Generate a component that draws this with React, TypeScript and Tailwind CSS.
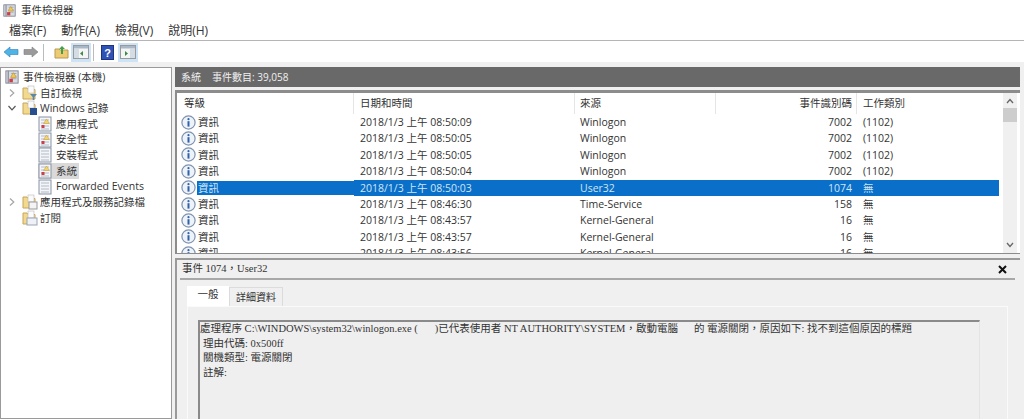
const sans = "font-['Open_Sans','Noto_Sans_CJK_TC',sans-serif]";

function InfoIcon() {
  return (
    <svg width="15" height="15" viewBox="0 0 15 15" className="shrink-0">
      <circle cx="7.5" cy="7.5" r="6.6" fill="#eef3f9" stroke="#7f93b0" strokeWidth="1.2" />
      <circle cx="7.5" cy="4.2" r="1.1" fill="#2f62a8" />
      <rect x="6.5" y="6.2" width="2" height="5.4" fill="#2f62a8" />
    </svg>
  );
}

function AppIcon({ size = 16 }: { size?: number }) {
  return (
    <svg width={size} height={size} viewBox="0 0 16 16" className="shrink-0">
      <rect x="1" y="1" width="14" height="14" fill="#d8dbe2" stroke="#7a7f8c" />
      <rect x="3" y="1" width="1.5" height="14" fill="#8e93a0" />
      <path d="M7 4h6M7 7h6M7 10h6" stroke="#9aa0ac" />
      <path d="M9.5 3 L13 8.5 H6.5 Z" fill="#f2c94c" stroke="#b88a1c" strokeWidth="0.6" />
      <rect x="5" y="10" width="4" height="4" fill="#c9404a" />
    </svg>
  );
}

function LogIcon({ plain }: { plain?: boolean }) {
  return (
    <svg width="14" height="16" viewBox="0 0 14 16" className="shrink-0">
      <rect x="1" y="1" width="12" height="14" fill="#f3f5f8" stroke="#8a94a3" />
      <path d="M3 4h8M3 7h8M3 10h8M3 13h8" stroke="#b3bac6" />
      {!plain && <path d="M8.5 3 L11.5 7.5 H5.5 Z" fill="#f2d36c" stroke="#c39a34" strokeWidth="0.5" />}
      {!plain && <rect x="3.5" y="9" width="3" height="3" fill="#c9404a" />}
    </svg>
  );
}

function FolderIcon({ badge }: { badge?: "filter" | "win" | "page" | "sub" }) {
  return (
    <svg width="16" height="16" viewBox="0 0 16 16" className="shrink-0">
      <path d="M1 3h4l1 1.5h7V14H1Z" fill="#f3d98b" stroke="#c6a65a" />
      <rect x="6" y="1" width="6" height="7" fill="#fbfbfb" stroke="#b9b9b9" strokeWidth="0.6" />
      {badge === "filter" && <path d="M8 9h7l-2.7 3v3h-1.6v-3Z" fill="#5b87a8" />}
      {badge === "win" && <rect x="8" y="8" width="7" height="7" fill="#2a4f8f" />}
      {badge === "page" && <rect x="7" y="8" width="8" height="7" fill="#f4f4f4" stroke="#9a9a9a" />}
      {badge === "sub" && <rect x="5" y="8" width="10" height="7" fill="#eef1f6" stroke="#9aa4b5" />}
    </svg>
  );
}

function Chevron({ down }: { down?: boolean }) {
  return (
    <svg width="8" height="8" viewBox="0 0 8 8" className="shrink-0">
      <path d={down ? "M0.5 2 L4 5.8 L7.5 2" : "M2 0.5 L5.8 4 L2 7.5"} fill="none" stroke={down ? "#555" : "#a6a6a6"} strokeWidth="1.2" />
    </svg>
  );
}

function ToolButton({ children, active }: { children: React.ReactNode; active?: boolean }) {
  return (
    <div className={`flex h-[19px] w-[20px] items-center justify-center ${active ? "bg-[#cde4f7]" : ""}`}>
      {children}
    </div>
  );
}

function PaneIcon({ right }: { right?: boolean }) {
  return (
    <svg width="16" height="14" viewBox="0 0 16 14">
      <rect x="0.5" y="0.5" width="15" height="13" fill="#f5f5f5" stroke="#9a9a9a" />
      <rect x="1" y="1" width="14" height="2.5" fill="#a9b7c6" />
      <rect x={right ? 10 : 1} y="4" width="5" height="9" fill="#d4dce4" />
      <path d={right ? "M5 6v5l3-2.5Z" : "M10 6v5l-3-2.5Z"} fill="#3c8c46" />
    </svg>
  );
}

function Arrow({ dir, color }: { dir: "l" | "r"; color: string }) {
  return (
    <svg width="16" height="12" viewBox="0 0 16 12">
      <path d={dir === "l" ? "M1 6 L7 1 V3.5 H15 V8.5 H7 V11 Z" : "M15 6 L9 1 V3.5 H1 V8.5 H9 V11 Z"} fill={color} stroke={dir === "l" ? "#2f7fb5" : "#7d7d7d"} strokeWidth="0.6" />
    </svg>
  );
}

const rows = [
  ["2018/1/3 上午 08:50:09", "Winlogon", "7002", "(1102)"],
  ["2018/1/3 上午 08:50:05", "Winlogon", "7002", "(1102)"],
  ["2018/1/3 上午 08:50:05", "Winlogon", "7002", "(1102)"],
  ["2018/1/3 上午 08:50:04", "Winlogon", "7002", "(1102)"],
  ["2018/1/3 上午 08:50:03", "User32", "1074", "無"],
  ["2018/1/3 上午 08:46:30", "Time-Service", "158", "無"],
  ["2018/1/3 上午 08:43:57", "Kernel-General", "16", "無"],
  ["2018/1/3 上午 08:43:57", "Kernel-General", "16", "無"],
  ["2018/1/3 上午 08:43:56", "Kernel-General", "16", "無"],
];

function TreeRow({ active, children, label }: { active?: boolean; children: React.ReactNode; label: string }) {
  return (
    <div className="flex h-[15.7px] items-center pl-[37px]">
      <div className={`flex items-center gap-[4px] pr-[2px] ${active ? "bg-[#d9d9d9]" : ""}`}>
        {children}
        <span className="whitespace-nowrap">{label}</span>
      </div>
    </div>
  );
}

export default function App() {
  return (
    <div className={`flex h-[419px] w-[1024px] flex-col overflow-hidden bg-[#f0f0f0] text-[11px] leading-none text-[#333] ${sans}`}>
      <div className="flex h-[20px] shrink-0 items-center gap-[5px] bg-white pl-[3px] pt-[1px]">
        <AppIcon size={13} />
        <span className="text-[10.5px]">事件檢視器</span>
      </div>
      <div className="flex h-[21px] shrink-0 items-center gap-[15px] border-b border-[#b5b5b5] bg-white pl-[9px] pt-[1px] text-[12px]">
        <span>檔案(F)</span>
        <span>動作(A)</span>
        <span>檢視(V)</span>
        <span>說明(H)</span>
      </div>
      <div className="flex h-[21px] shrink-0 items-center bg-white pl-[1px] pt-[1px]">
        <ToolButton><Arrow dir="l" color="#4fb3e6" /></ToolButton>
        <ToolButton><Arrow dir="r" color="#9a9a9a" /></ToolButton>
        <div className="mx-[2px] h-[17px] w-px bg-[#bbb]" />
        <div className="w-[5px]" />
        <ToolButton>
          <svg width="15" height="14" viewBox="0 0 15 14">
            <path d="M1 4h4l1 1h8v8H1Z" fill="#eecb72" stroke="#b89a4e" />
            <path d="M7 9V4H5l3-3 3 3H9v5Z" fill="#3ea04a" />
          </svg>
        </ToolButton>
        <ToolButton active><PaneIcon /></ToolButton>
        <div className="mx-[2px] h-[17px] w-px bg-[#bbb]" />
        <div className="w-[1px]" />
        <ToolButton>
          <svg width="13" height="15" viewBox="0 0 13 15">
            <rect x="0.5" y="0.5" width="12" height="14" fill="#2f52b5" stroke="#1d3580" />
            <text x="6.5" y="11.5" textAnchor="middle" fontSize="11" fontWeight="700" fill="#fff" fontFamily="Liberation Sans">?</text>
          </svg>
        </ToolButton>
        <div className="w-[1px]" />
        <ToolButton active><PaneIcon right /></ToolButton>
      </div>

      <div className="flex min-h-0 flex-1 pt-[5px]">
        {/* Tree */}
        <div className="mr-[3px] flex w-[172px] shrink-0 flex-col border border-[#9a9a9a] bg-white pt-[1px] text-[10.5px]">
          <div className="flex h-[16px] items-center gap-[4px] pl-[4px]">
            <AppIcon size={14} />
            <span>事件檢視器 (本機)</span>
          </div>
          <div className="flex h-[15.5px] items-center pl-[7px]"><Chevron /><span className="w-[6px]" /><FolderIcon badge="filter" /><span className="ml-[2px]">自訂檢視</span></div>
          <div className="flex h-[15.5px] items-center pl-[7px]"><Chevron down /><span className="w-[6px]" /><FolderIcon badge="win" /><span className="ml-[2px]">Windows 記錄</span></div>
          <TreeRow label="應用程式"><LogIcon /></TreeRow>
          <TreeRow label="安全性"><LogIcon /></TreeRow>
          <TreeRow label="安裝程式"><LogIcon plain /></TreeRow>
          <TreeRow active label="系統"><LogIcon /></TreeRow>
          <TreeRow label="Forwarded Events"><LogIcon plain /></TreeRow>
          <div className="flex h-[16px] items-center pl-[7px]"><Chevron /><span className="w-[6px]" /><FolderIcon badge="page" /><span className="ml-[2px]">應用程式及服務記錄檔</span></div>
          <div className="flex h-[16px] items-center gap-[2px] pl-[21px]"><FolderIcon badge="sub" /><span>訂閱</span></div>
        </div>

        {/* Right */}
        <div className="mr-[4px] flex min-w-0 flex-1 flex-col">
          <div className="flex h-[20px] shrink-0 items-center gap-[11px] bg-[#696969] pl-[6px] text-[10px] text-[#f0f0f0]">
            <span>系統</span>
            <span>事件數目: 39,058</span>
          </div>
          {/* Event list */}
          <div className="mt-[3px] flex h-[164px] shrink-0 overflow-hidden border-2 border-b border-[#8c8c8c] border-r-0 border-t-[3px] bg-white">
            <div className="min-w-0 flex-1 overflow-hidden">
              <div className="flex h-[21px] items-center text-[10.5px]">
                <div className="flex h-full w-[177px] shrink-0 items-center border-r border-[#e5e5e5] pl-[7px]">等級</div>
                <div className="flex h-full w-[221px] shrink-0 items-center border-r border-[#e5e5e5] pl-[6px]">日期和時間</div>
                <div className="flex h-full w-[141px] shrink-0 items-center border-r border-[#e5e5e5] pl-[5px]">來源</div>
                <div className="flex h-full w-[141px] shrink-0 items-center justify-end border-r border-[#e5e5e5] pr-[4px]">事件識別碼</div>
                <div className="flex h-full items-center pl-[6px]">工作類別</div>
              </div>
              {rows.map((r, i) => {
                const sel = i === 4;
                return (
                  <div key={i} className="flex h-[16.4px] items-center text-[10.5px]">
                    <div className="flex w-[177px] shrink-0 items-center pl-[4px]">
                      <InfoIcon />
                      <span className={`ml-px flex-1 py-[2px] pl-[1px] ${sel ? "bg-[#0a6fc9] text-[#cfe6f7]" : ""}`}>資訊</span>
                    </div>
                    <div className={`flex h-full flex-1 items-center ${sel ? "bg-[#0a6fc9] text-[#cfe6f7]" : ""}`}>
                      <div className="w-[221px] shrink-0 pl-[6px]">{r[0]}</div>
                      <div className="w-[141px] shrink-0 pl-[5px]">{r[1]}</div>
                      <div className="w-[141px] shrink-0 pr-[5px] text-right">{r[2]}</div>
                      <div className="pl-[6px]">{r[3]}</div>
                    </div>
                  </div>
                );
              })}
            </div>
            <div className="ml-[4px] mr-[3px] flex w-[14px] shrink-0 flex-col items-center bg-[#f0f0f0]">
              <div className="flex h-[15px] items-center justify-center"><svg width="8" height="6" viewBox="0 0 8 6"><path d="M1 5 L4 1.5 L7 5" fill="none" stroke="#666" strokeWidth="1.3" /></svg></div>
              <div className="h-[14px] w-full bg-[#cdcdcd]" />
              <div className="flex-1" />
              <div className="flex h-[16px] items-center justify-center"><svg width="8" height="6" viewBox="0 0 8 6"><path d="M1 1 L4 4.5 L7 1" fill="none" stroke="#666" strokeWidth="1.3" /></svg></div>
            </div>
          </div>
          {/* Detail */}
          <div className="mt-[4px] flex min-h-0 flex-1 flex-col border-l-2 border-t-2 border-[#9a9a9a]">
            <div className="ml-[3px] mr-[5px] flex h-[20px] shrink-0 items-center justify-between border-b-2 border-[#a8a8a8] pl-[2px] pr-[8px] font-['Liberation_Serif','Noto_Sans_CJK_TC',serif] text-[10.5px]">
              <span>事件 1074，User32</span>
              <svg width="9" height="9" viewBox="0 0 9 9"><path d="M1 1 L8 8 M8 1 L1 8" stroke="#111" strokeWidth="2" /></svg>
            </div>
            <div className="ml-[10px] mr-[8px] mt-[6px] flex h-[20px] shrink-0 items-end">
              <div className="flex h-[20px] w-[42px] items-center justify-center bg-white pb-[3px] text-[10.5px]">一般</div>
              <div className="flex h-[19px] w-[54px] items-center justify-center border border-b-0 border-[#dcdcdc] bg-[#f0f0f0] pb-[1px] text-[10px]">詳細資料</div>
            </div>
            <div className="ml-[10px] mr-[12px] flex min-h-0 flex-1 border border-b-0 border-[#fafafa] bg-[#efefef] pl-[10px] pt-[13px]">
              <div className="w-[782px] border-l-2 border-r border-t-2 border-[#8a8a8a] border-r-[#e4e4e4] font-['Liberation_Serif','Noto_Sans_CJK_TC',serif] text-[10.5px] leading-[14.6px]">
                <div className="whitespace-nowrap">處理程序 C:\WINDOWS\system32\winlogon.exe (<span className="inline-block w-[17px]" />)已代表使用者 NT AUTHORITY\SYSTEM，啟動電腦<span className="inline-block w-[16px]" />的 電源關閉，原因如下: 找不到這個原因的標題</div>
                <div className="pl-[3px]">理由代碼: 0x500ff</div>
                <div className="pl-[3px]">關機類型: 電源關閉</div>
                <div className="pl-[3px]">註解:</div>
              </div>
            </div>
          </div>
        </div>
      </div>
    </div>
  );
}
